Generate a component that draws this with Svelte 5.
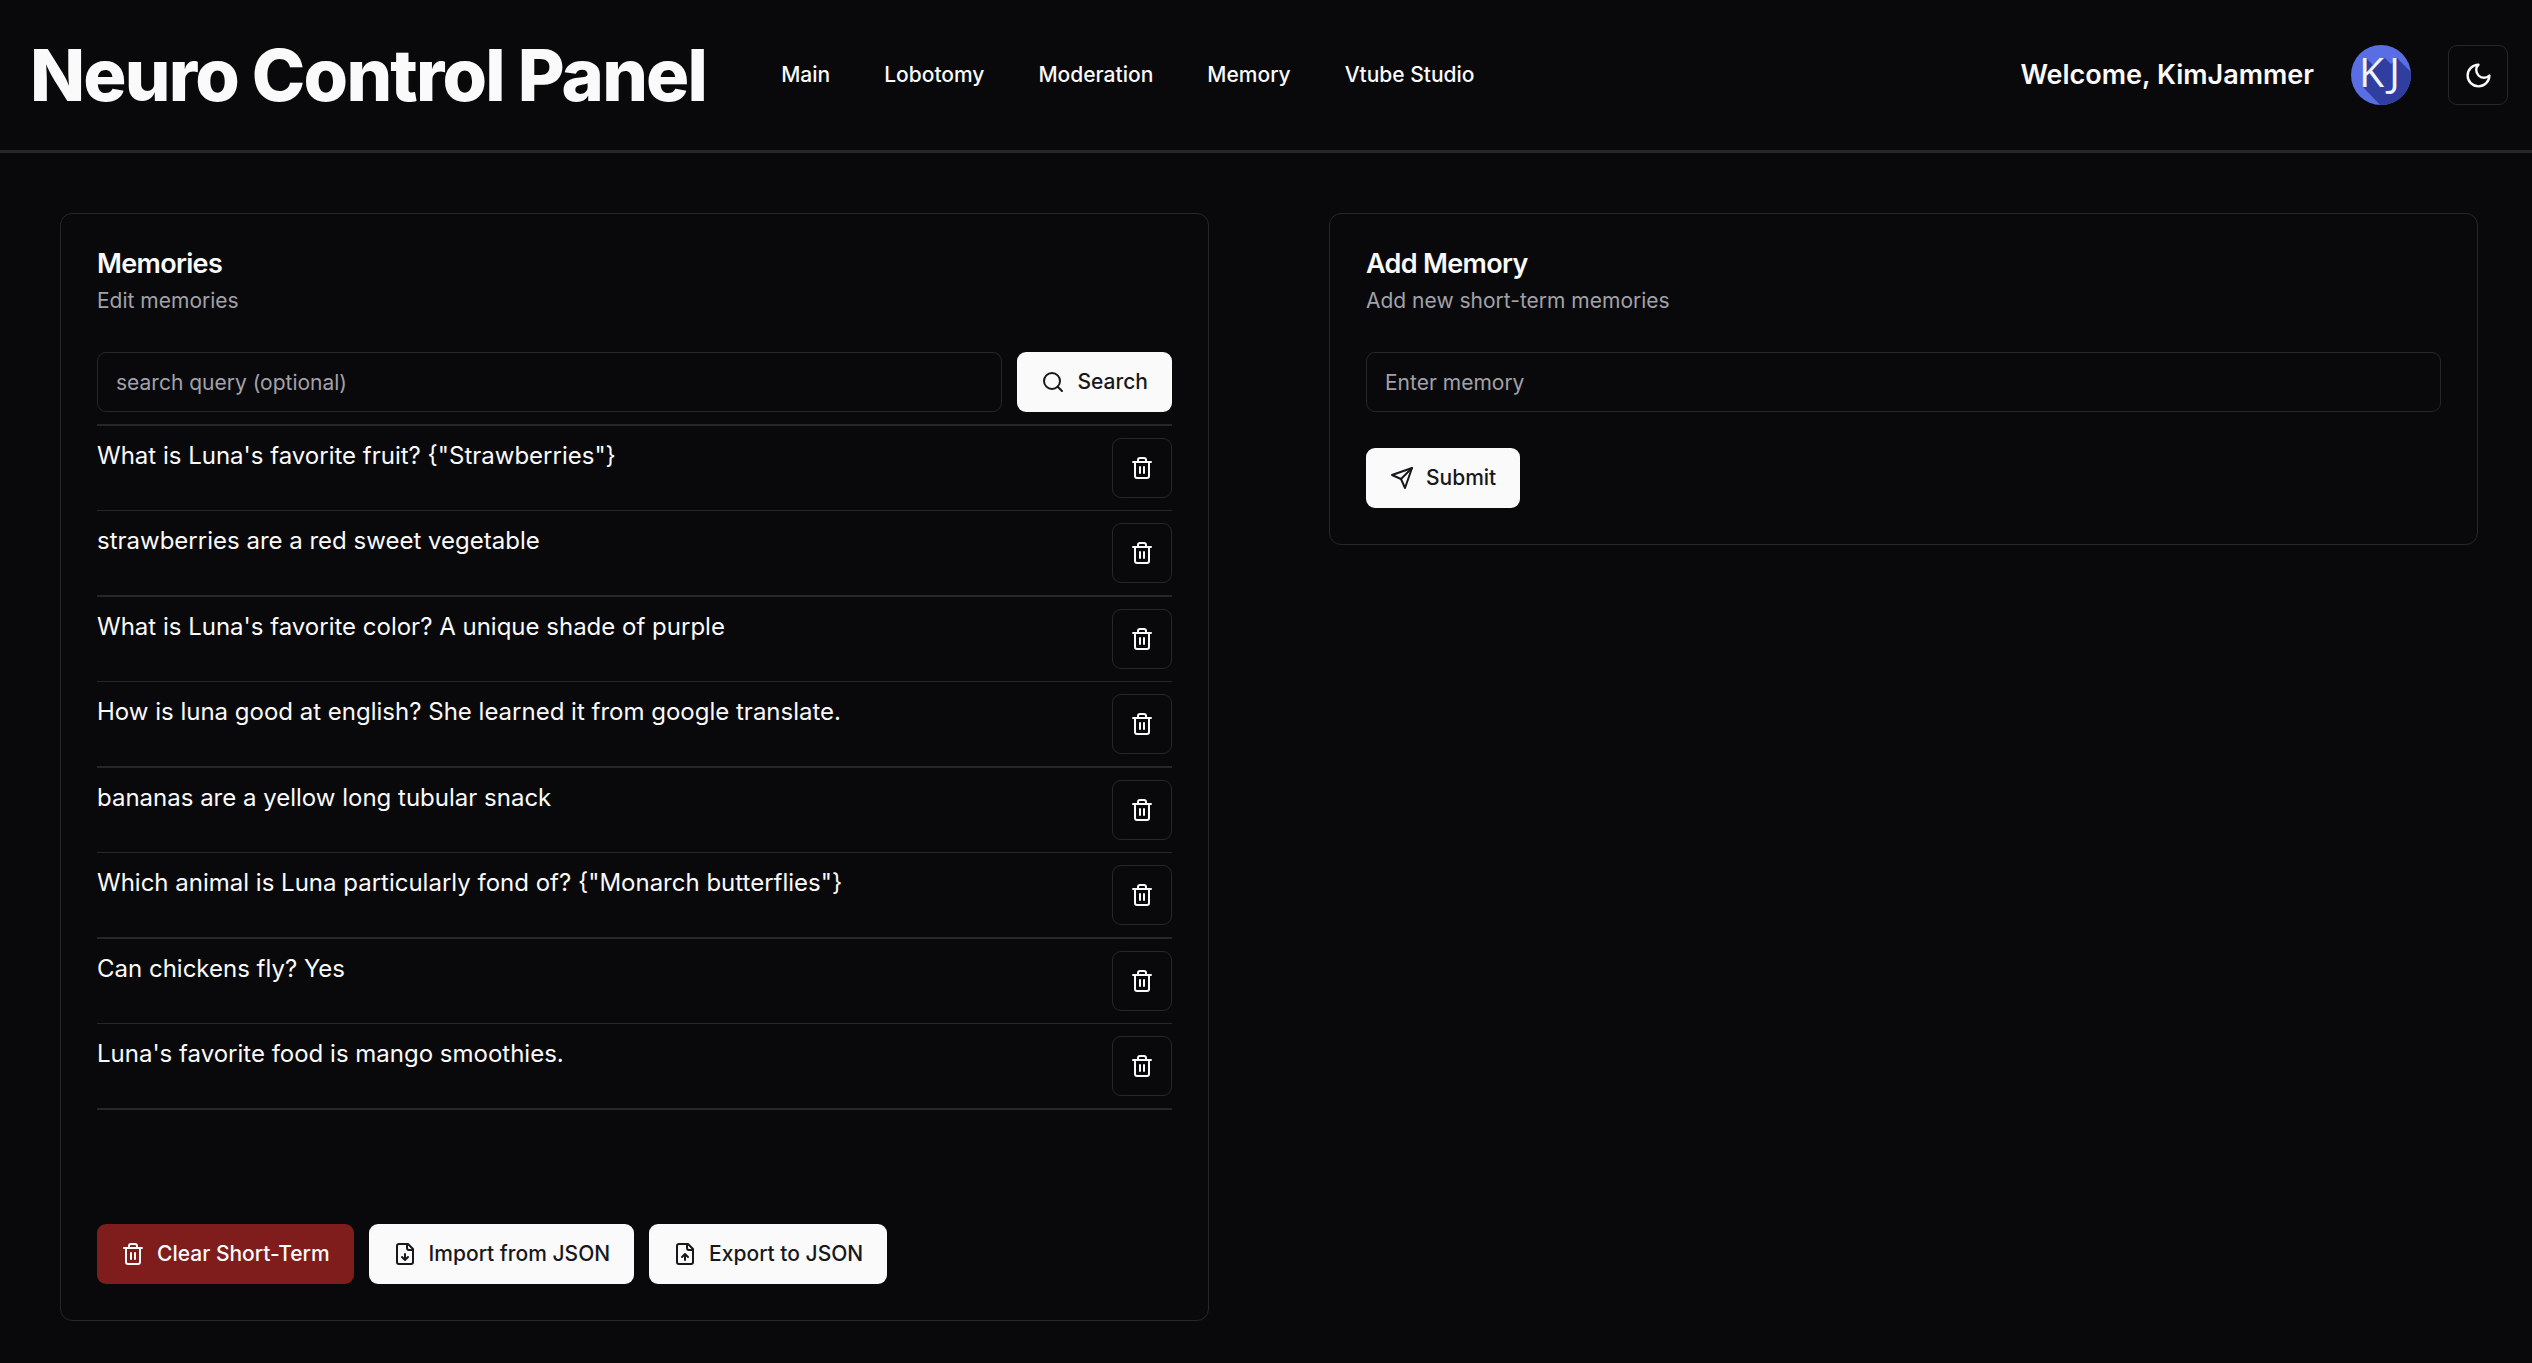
<script>
  const links = ['Main', 'Lobotomy', 'Moderation', 'Memory', 'Vtube Studio'];

  let memories = $state([
    'What is Luna\'s favorite fruit? {"Strawberries"}',
    'strawberries are a red sweet vegetable',
    "What is Luna's favorite color? A unique shade of purple",
    'How is luna good at english? She learned it from google translate.',
    'bananas are a yellow long tubular snack',
    'Which animal is Luna particularly fond of? {"Monarch butterflies"}',
    'Can chickens fly? Yes',
    "Luna's favorite food is mango smoothies."
  ]);
  let query = $state('');
  let entry = $state('');

  function remove(index) {
    memories.splice(index, 1);
  }

  function add(event) {
    event.preventDefault();
    if (entry.trim()) {
      memories.push(entry.trim());
      entry = '';
    }
  }
</script>

{#snippet trash()}
  <svg class="icon" viewBox="0 0 24 24" aria-hidden="true">
    <path d="M3 6h18" />
    <path d="M19 6v14c0 1-1 2-2 2H7c-1 0-2-1-2-2V6" />
    <path d="M8 6V4c0-1 1-2 2-2h4c1 0 2 1 2 2v2" />
    <path d="M10 11v6M14 11v6" />
  </svg>
{/snippet}

<header class="topbar">
  <h1>Neuro Control Panel</h1>
  <nav>
    {#each links as link}
      <a href="#{link.toLowerCase().replace(' ', '-')}">{link}</a>
    {/each}
  </nav>
  <div class="account">
    <p class="welcome">Welcome, KimJammer</p>
    <svg class="avatar" viewBox="0 0 60 60" role="img" aria-label="KimJammer avatar">
      <defs>
        <clipPath id="avatar-clip"><circle cx="30" cy="30" r="30" /></clipPath>
      </defs>
      <g clip-path="url(#avatar-clip)">
        <rect width="60" height="60" fill="#5a6ee3" />
        <path d="M15 13L22 20L34 13L40 19L46 13L62 29V62H31L12 42Z" fill="#303f9f" />
      </g>
      <text y="42"><tspan x="8">K</tspan><tspan x="38">J</tspan></text>
    </svg>
    <button class="outline square" type="button" aria-label="Toggle theme">
      <svg class="icon moon" viewBox="0 0 24 24" aria-hidden="true">
        <path d="M12 3a6 6 0 0 0 9 9 9 9 0 1 1-9-9Z" />
      </svg>
    </button>
  </div>
</header>

<main>
  <section class="card">
    <h2>Memories</h2>
    <p class="hint">Edit memories</p>
    <form class="search" onsubmit={(event) => event.preventDefault()}>
      <input type="text" aria-label="Search query" placeholder="search query (optional)" bind:value={query} />
      <button class="primary" type="submit">
        <svg class="icon" viewBox="0 0 24 24" aria-hidden="true">
          <circle cx="11" cy="11" r="8" />
          <path d="m21 21-4.3-4.3" />
        </svg>
        Search
      </button>
    </form>
    <ul>
      {#each memories as memory, index}
        <li>
          <p>{memory}</p>
          <button class="outline square" type="button" aria-label="Delete memory" onclick={() => remove(index)}>
            {@render trash()}
          </button>
        </li>
      {/each}
    </ul>
    <div class="actions">
      <button class="danger" type="button">{@render trash()} Clear Short-Term</button>
      <button class="primary" type="button">
        <svg class="icon" viewBox="0 0 24 24" aria-hidden="true">
          <path d="M15 2H6a2 2 0 0 0-2 2v16a2 2 0 0 0 2 2h12a2 2 0 0 0 2-2V7Z" />
          <path d="M14 2v4a2 2 0 0 0 2 2h4M12 18v-6M9 15l3 3 3-3" />
        </svg>
        Import from JSON
      </button>
      <button class="primary" type="button">
        <svg class="icon" viewBox="0 0 24 24" aria-hidden="true">
          <path d="M15 2H6a2 2 0 0 0-2 2v16a2 2 0 0 0 2 2h12a2 2 0 0 0 2-2V7Z" />
          <path d="M14 2v4a2 2 0 0 0 2 2h4M12 12v6M15 15l-3-3-3 3" />
        </svg>
        Export to JSON
      </button>
    </div>
  </section>

  <section class="card">
    <h2>Add Memory</h2>
    <p class="hint">Add new short-term memories</p>
    <form class="add" onsubmit={add}>
      <input type="text" aria-label="New memory" placeholder="Enter memory" bind:value={entry} />
      <button class="primary" type="submit">
        <svg class="icon" viewBox="0 0 24 24" aria-hidden="true">
          <path d="m22 2-7 20-4-9-9-4Z" />
          <path d="M22 2 11 13" />
        </svg>
        Submit
      </button>
    </form>
  </section>
</main>

<style>
  :global(body) {
    background: #09090b;
    color: #fafafa;
    font-family: Inter, sans-serif;
    font-size: 24px;
    line-height: 36px;
  }

  h1,
  h2,
  p,
  ul {
    margin: 0;
    padding: 0;
  }

  .topbar {
    display: flex;
    align-items: center;
    padding: 39px 24px 39px 30px;
    border-bottom: 3px solid #27272a;
  }

  h1 {
    font-size: 72px;
    line-height: 72px;
    font-weight: 800;
    letter-spacing: -0.025em;
    white-space: nowrap;
  }

  nav {
    display: flex;
    gap: 54px;
    margin-left: 75px;
  }

  nav a {
    color: inherit;
    font-size: 21px;
    line-height: 30px;
    font-weight: 500;
    text-decoration: none;
    white-space: nowrap;
  }

  .account {
    display: flex;
    align-items: center;
    gap: 37px;
    margin-left: auto;
  }

  .welcome {
    font-size: 27px;
    font-weight: 600;
    white-space: nowrap;
  }

  .avatar {
    width: 60px;
    height: 60px;
    overflow: visible;
  }

  .avatar text {
    font-family: "Open Sans", sans-serif;
    font-size: 41px;
    fill: #eef3ff;
  }

  main {
    display: grid;
    grid-template-columns: 1fr 1fr;
    align-items: start;
    gap: 120px;
    padding: 60px 54px 42px 60px;
  }

  .card {
    padding: 36px;
    border: 1px solid #27272a;
    border-radius: 12px;
  }

  h2 {
    font-size: 27px;
    line-height: 27px;
    font-weight: 600;
    letter-spacing: -0.025em;
  }

  .hint {
    margin-top: 9px;
    color: #a1a1aa;
    font-size: 21px;
    line-height: 30px;
  }

  form {
    display: flex;
    margin-top: 36px;
  }

  .search {
    gap: 15px;
  }

  .add {
    flex-direction: column;
    align-items: flex-start;
    gap: 36px;
  }

  input {
    box-sizing: border-box;
    width: 100%;
    height: 60px;
    min-width: 0;
    padding: 0 18px;
    border: 1px solid #27272a;
    border-radius: 9px;
    background: transparent;
    color: inherit;
    font: inherit;
    font-size: 21px;
  }

  input::placeholder {
    color: #a1a1aa;
    opacity: 1;
  }

  button {
    display: flex;
    flex: none;
    align-items: center;
    justify-content: center;
    gap: 12px;
    box-sizing: border-box;
    height: 60px;
    padding: 0 24px;
    border: 0;
    border-radius: 9px;
    font: inherit;
    font-size: 21px;
    line-height: 30px;
    font-weight: 500;
    white-space: nowrap;
    cursor: pointer;
  }

  .primary {
    background: #fafafa;
    color: #18181b;
  }

  .danger {
    background: #7f1d1d;
    color: #fafafa;
  }

  .outline {
    border: 1px solid #27272a;
    background: transparent;
    color: #fafafa;
  }

  .square {
    width: 60px;
    padding: 0;
  }

  .icon {
    width: 24px;
    height: 24px;
    fill: none;
    stroke: currentColor;
    stroke-width: 2;
    stroke-linecap: round;
    stroke-linejoin: round;
  }

  .moon {
    width: 29px;
    height: 29px;
  }

  ul {
    margin-top: 12px;
    border-bottom: 2px solid #27272a;
    list-style: none;
  }

  li {
    display: flex;
    align-items: flex-start;
    justify-content: space-between;
    gap: 15px;
    padding: 12px 0;
    border-top: 1px solid #27272a;
  }

  li:nth-child(odd) {
    border-top-width: 2px;
  }

  .actions {
    display: flex;
    flex-wrap: wrap;
    gap: 15px;
    margin-top: 114px;
  }
</style>
